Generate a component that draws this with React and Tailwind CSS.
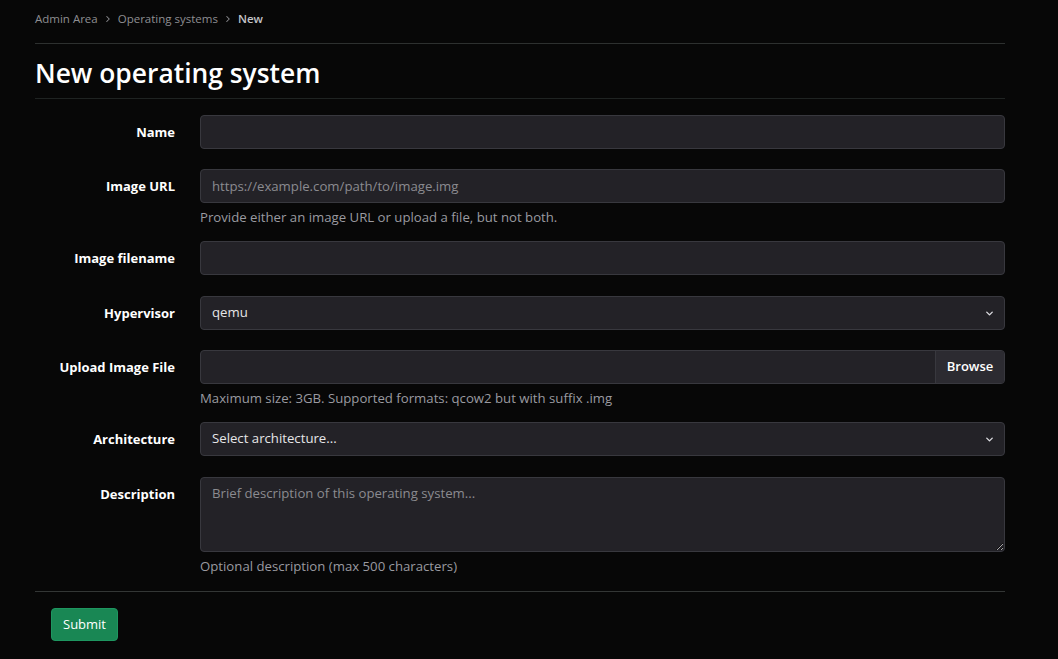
import { ChevronRight, ChevronDown } from 'lucide-react'

const inputCls =
  'w-full h-[34px] rounded-[4px] border border-[#38383e] bg-[#232227] px-[11px] text-[13.2px] text-[#e6e6e8] placeholder:text-[#8b8b90] outline-none'

function Row({ label, help, children, gap = 'mb-[20px]' }) {
  return (
    <div className={`grid grid-cols-[165px_1fr] ${gap}`}>
      <label className="pr-[25px] pt-[7px] text-right text-[13px] leading-[20px] font-bold text-white">
        {label}
      </label>
      <div>
        {children}
        {help && (
          <div className="mt-[5px] h-[18px] text-[13.2px] leading-[18px] text-[#9a9aa0]">{help}</div>
        )}
      </div>
    </div>
  )
}

function SelectBox({ value }) {
  return (
    <div className="relative">
      <select defaultValue={value} className={`${inputCls} appearance-none pr-8`}>
        <option>{value}</option>
      </select>
      <ChevronDown
        className="pointer-events-none absolute right-[10px] top-[12px] h-[11px] w-[11px] text-[#dcdce0]"
        strokeWidth={3}
      />
    </div>
  )
}

export default function App() {
  return (
    <div
      className="min-h-screen bg-[#070707] text-[#dee2e6] [color-scheme:dark]"
      style={{ fontFamily: '"Open Sans", "Noto Sans", sans-serif' }}
    >
      <div className="ml-[35px] w-[970px]">
        {/* breadcrumb */}
        <nav className="flex h-[43px] items-center pb-[6px] text-[11.5px] text-[#8e8e92]">
          <span>Admin Area</span>
          <ChevronRight className="mx-[5px] h-[10px] w-[10px]" strokeWidth={2.5} />
          <span>Operating systems</span>
          <ChevronRight className="mx-[5px] h-[10px] w-[10px]" strokeWidth={2.5} />
          <span className="font-semibold text-[#c4c4c8]">New</span>
        </nav>
        <div className="border-t border-[#2d302f]" />
        <h1 className="flex h-[54px] items-center pt-[5px] text-[26.4px] font-semibold text-white">
          New operating system
        </h1>
        <div className="border-t border-[#1f2322]" />

        <form className="pt-[16px]">
          <Row label="Name">
            <input className={inputCls} />
          </Row>
          <Row
            label="Image URL"
            help="Provide either an image URL or upload a file, but not both."
            gap="mb-[15px]"
          >
            <input className={inputCls} placeholder="https://example.com/path/to/image.img" />
          </Row>
          <Row label="Image filename" gap="mb-[21px]">
            <input className={inputCls} />
          </Row>
          <Row label="Hypervisor">
            <SelectBox value="qemu" />
          </Row>
          <Row
            label="Upload Image File"
            help="Maximum size: 3GB. Supported formats: qcow2 but with suffix .img"
            gap="mb-[15px]"
          >
            <div className="flex h-[34px] overflow-hidden rounded-[4px] border border-[#38383e] bg-[#232227]">
              <div className="flex-1" />
              <div className="flex w-[69px] items-center justify-center border-l border-[#38383e] bg-[#2c2b31] text-[13px] font-semibold text-white">
                Browse
              </div>
            </div>
          </Row>
          <Row label="Architecture" gap="mb-[21px]">
            <SelectBox value="Select architecture..." />
          </Row>
          <Row label="Description" help="Optional description (max 500 characters)" gap="mb-[16px]">
            <textarea
              className={`${inputCls} block h-[75px] resize-y py-[5px] leading-[20px]`}
              placeholder="Brief description of this operating system..."
            />
          </Row>
        </form>
        <div className="border-t border-[#333635]" />
        <div className="pl-[16px] pt-[16px]">
          <button className="h-[33px] rounded-[4px] border border-[#1e9660] bg-[#198754] px-[11px] text-[13px] text-white">
            Submit
          </button>
        </div>
      </div>
    </div>
  )
}
